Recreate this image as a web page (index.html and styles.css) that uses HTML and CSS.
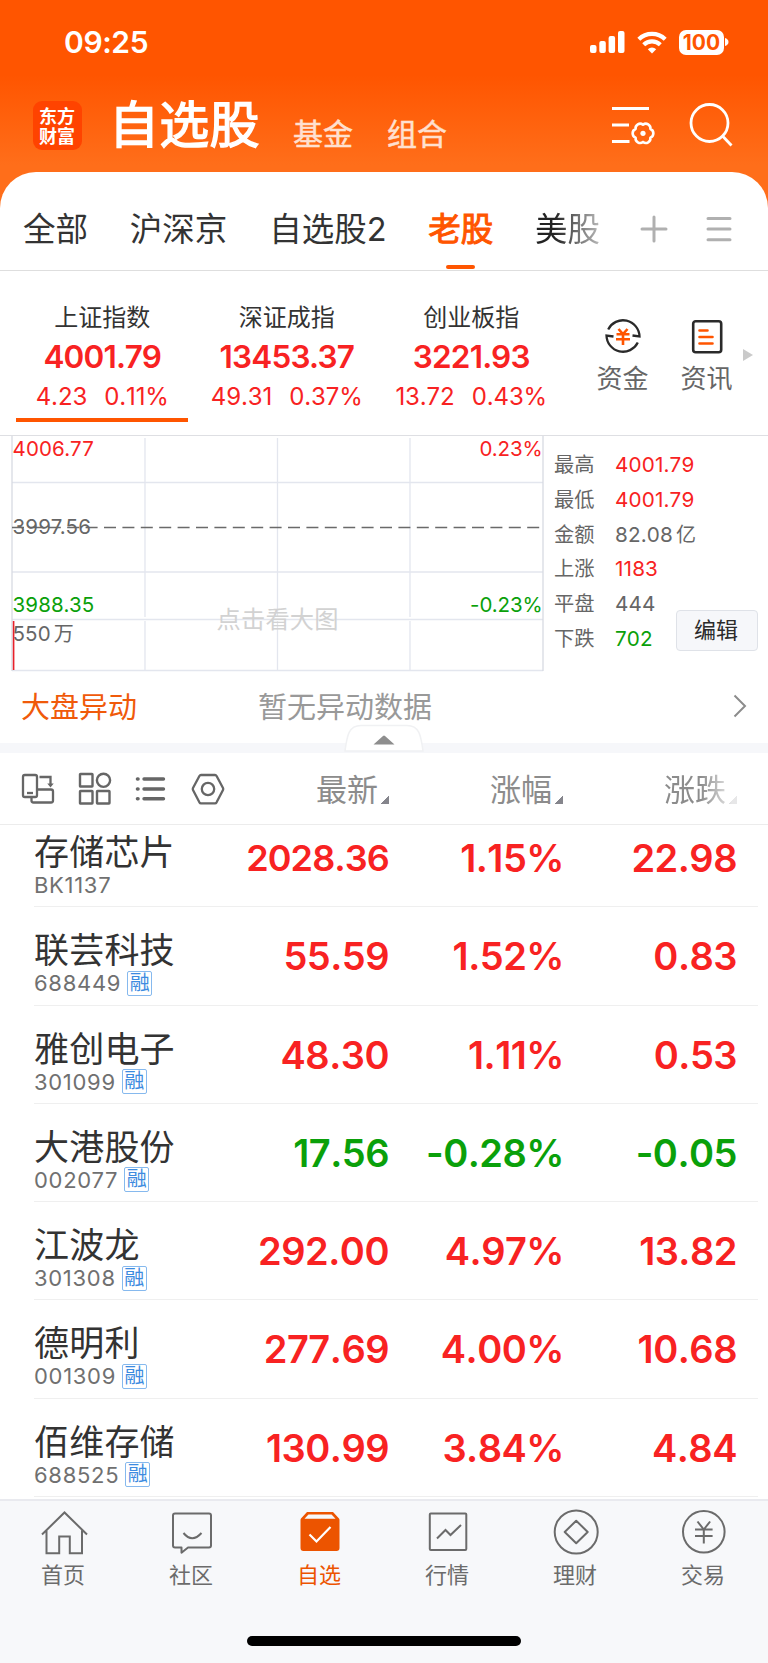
FILE: index.html
```html
<!DOCTYPE html>
<html lang="zh-CN">
<head>
    <meta charset="UTF-8">
    <meta name="viewport" content="width=device-width, initial-scale=1.0">
    <title>自选股</title>
    <link rel="stylesheet" href="styles.css">
</head>
<body>
    <header class="header">
        <div class="status-bar">
            <span class="time">09:25</span>
            <div class="status-icons">
                <svg class="signal" width="35" height="22" viewBox="0 0 35 22" fill="#fff">
                    <rect x="0" y="14" width="6.5" height="8" rx="2"/>
                    <rect x="9.3" y="10" width="6.5" height="12" rx="2"/>
                    <rect x="18.6" y="5" width="6.5" height="17" rx="2"/>
                    <rect x="28" y="0" width="6.5" height="22" rx="2"/>
                </svg>
                <svg class="wifi" width="30" height="23" viewBox="0 0 30 23" fill="none" stroke="#fff" stroke-width="4.2">
                    <path d="M1.8 8.2a19 19 0 0 1 26.4 0"/>
                    <path d="M6.7 13.8a12 12 0 0 1 16.6 0"/>
                    <path d="M15 22.5l-4.2-4.2a6 6 0 0 1 8.4 0z" fill="#fff" stroke="none"/>
                </svg>
                <span class="battery">100</span>
                <svg width="4" height="10" viewBox="0 0 4 10" fill="#fff"><path d="M0 1c2 .5 3.5 2 3.5 4S2 8.5 0 9z"/></svg>
            </div>
        </div>
        <div class="title-bar">
            <div class="logo">东方财富</div>
            <h1>自选股</h1>
            <a class="title-link">基金</a>
            <a class="title-link">组合</a>
            <svg class="filter-icon" width="46" height="42" viewBox="0 0 46 42" fill="none" stroke="#fff" stroke-width="3">
                <path d="M1 3.5h37M1 20h17M1 36.5h17.5"/>
                <path stroke-width="2.6" stroke-linejoin="round" d="M39.4 24a4.600 4.600 0 0 1 0 8.600a4.600 4.600 0 0 1-7.400 4.300a4.600 4.600 0 0 1-7.400-4.300a4.600 4.600 0 0 1 0-8.600a4.600 4.600 0 0 1 7.400-4.300a4.600 4.600 0 0 1 7.400 4.300z"/>
                <circle cx="32" cy="28.3" r="2.6" fill="#fff" stroke="none"/>
            </svg>
            <svg class="search-icon" width="44" height="46" viewBox="0 0 44 46" fill="none" stroke="#fff" stroke-width="2.8">
                <circle cx="20.5" cy="21" r="18.5"/>
                <path d="M33.5 34l9 9.5"/>
            </svg>
        </div>
    </header>

    <main class="sheet">
        <nav class="tabs">
            <a>全部</a>
            <a>沪深京</a>
            <a>自选股2</a>
            <a class="active">老股</a>
            <a class="fading">美股</a>
            <svg class="plus-icon" width="28" height="28" viewBox="0 0 28 28" stroke="#b0b0b0" stroke-width="3" stroke-linecap="round"><path d="M2 14h24M14 2v24"/></svg>
            <svg class="menu-icon" width="26" height="28" viewBox="0 0 26 28" stroke="#b0b0b0" stroke-width="3" stroke-linecap="round"><path d="M2 3.5h22M2 14h22M2 24.8h22"/></svg>
        </nav>

        <section class="indexes">
            <div class="index selected">
                <h3>上证指数</h3>
                <strong>4001.79</strong>
                <p><span>4.23</span><span>0.11%</span></p>
            </div>
            <div class="index">
                <h3>深证成指</h3>
                <strong>13453.37</strong>
                <p><span>49.31</span><span>0.37%</span></p>
            </div>
            <div class="index">
                <h3>创业板指</h3>
                <strong>3221.93</strong>
                <p><span>13.72</span><span>0.43%</span></p>
            </div>
            <div class="shortcut funds">
                <svg width="38" height="38" viewBox="0 0 38 38" fill="none" stroke="#2a2a2a" stroke-width="2.3">
                    <path d="M4.2 12.5A16.5 16.5 0 0 1 35.5 19.5l-7-1M33.8 25.5A16.5 16.5 0 0 1 2.5 18.5l7 1"/>
                    <path stroke="#ff5500" stroke-width="2.6" d="M14.5 12l4.5 5 4.5-5M12.5 17.3h13M12 22.3h14M19 17v11"/>
                </svg>
                <span>资金</span>
            </div>
            <div class="shortcut news">
                <svg width="38" height="38" viewBox="0 0 38 38" fill="none" stroke="#2a2a2a" stroke-width="2.6">
                    <rect x="5.2" y="4.2" width="28" height="31" rx="2.5"/>
                    <path stroke="#ff5500" stroke-width="2.6" stroke-linecap="round" d="M11.5 13.5h8M11.5 20h13M11.5 26.5h13"/>
                </svg>
                <span>资讯</span>
            </div>
            <svg class="more-arrow" width="10" height="14" viewBox="0 0 10 14" fill="#cacaca"><path d="M0 1l10 6-10 6z"/></svg>
        </section>

        <section class="market">
            <svg class="chart" width="545" height="238" viewBox="0 0 545 238">
                <g stroke="#e3e6ee" stroke-width="1.3" fill="none">
                    <path d="M12 46.5h531M12 136h531M12 183.5h531M12 234.5h531"/>
                    <path d="M145 2v179M277.5 2v179M410 2v179M145 185v49M277.5 185v49M410 185v49"/>
                    <path stroke="#d8dbe2" d="M12 0v235M543 0v235"/>
                </g>
                <path stroke="#6a6a6a" stroke-width="1.4" stroke-dasharray="12 6.4" d="M12 91.5h530"/>
                <path stroke="#e8202a" stroke-width="1.6" d="M13.6 185v49"/>
                <text class="watermark" x="216.500" y="191.500">点击看大图</text>
                <text class="up" x="12.5" y="20">4006.77</text>
                <text class="flat" x="12.5" y="98">3997.56</text>
                <text class="down" x="12.5" y="175.5">3988.35</text>
                <text class="flat" x="12.5" y="205">550<tspan class="unit" dx="3">万</tspan></text>
                <text class="percent up" x="542.5" y="20" text-anchor="end">0.23%</text>
                <text class="percent down" x="542.5" y="175.5" text-anchor="end">-0.23%</text>
            </svg>
            <dl class="stats">
                <dt>最高</dt><dd class="up">4001.79</dd>
                <dt>最低</dt><dd class="up">4001.79</dd>
                <dt>金额</dt><dd>82.08<span class="unit">亿</span></dd>
                <dt>上涨</dt><dd class="up">1183</dd>
                <dt>平盘</dt><dd>444</dd>
                <dt>下跌</dt><dd class="down">702</dd>
            </dl>
            <button class="edit-button">编辑</button>
        </section>

        <section class="movement">
            <h2>大盘异动</h2>
            <p>暂无异动数据</p>
            <svg width="14" height="24" viewBox="0 0 14 24" fill="none" stroke="#8c8c8c" stroke-width="2"><path d="M1.5 1.5L12 12 1.5 22.5"/></svg>
        </section>
        <div class="divider">
            <svg class="collapse" width="80" height="28" viewBox="0 0 80 28">
                <path d="M1 27C3 13 4 1.5 17 1.5h46C76 1.5 77 13 79 27z" fill="#fff" stroke="#f0f1f3" stroke-width="1.5"/>
                <path d="M29.5 20.5L39 12q1-.9 2 0l9.5 8.5z" fill="#8e8e8e"/>
            </svg>
        </div>

        <section class="list-head">
            <div class="tools">
                <svg width="34" height="34" viewBox="0 0 34 34" fill="none" stroke="#666" stroke-width="2.3">
                    <rect x="2" y="3" width="14" height="22" rx="1.8"/>
                    <path d="M6 21h6"/>
                    <path d="M16 17.5h14q2 0 2 2v9q0 2-2 2H12.5q-2 0-2-2V25M18.5 5h11v8"/>
                    <path d="M26.3 11.5h6.4l-3.2 4z" fill="#666" stroke="none"/>
                </svg>
                <svg width="34" height="34" viewBox="0 0 34 34" fill="none" stroke="#666" stroke-width="2.4">
                    <rect x="2" y="2" width="12.5" height="12.5" rx=".5"/>
                    <circle cx="25.5" cy="8.3" r="6.6"/>
                    <rect x="2" y="19" width="12.5" height="12.5" rx=".5"/>
                    <rect x="19" y="19" width="12.5" height="12.5" rx=".5"/>
                </svg>
                <svg width="34" height="34" viewBox="0 0 34 34" fill="none" stroke="#666" stroke-width="3.4" stroke-linecap="round">
                    <path d="M10 7h19.500M10 17h19.500M10 26.7h19.500"/>
                    <path d="M3.500 7h.5M3.500 17h.5M3.500 26.7h.5" stroke-width="3.6"/>
                </svg>
                <svg width="34" height="34" viewBox="0 0 34 34" fill="none" stroke="#666" stroke-width="2.3" stroke-linejoin="round">
                    <path d="M10 3h14q1 0 1.6 1L32 16q.5 1 0 2l-6.4 12.3q-.6 1-1.6 1H10q-1 0-1.6-1L2 18q-.5-1 0-2L8.4 4Q9 3 10 3z"/>
                    <circle cx="17" cy="17" r="6.2"/>
                </svg>
            </div>
            <span class="column">最新<i></i></span>
            <span class="column">涨幅<i></i></span>
            <span class="column faded">涨跌<i></i></span>
        </section>

        <section class="stocks">
            <div class="stock up">
                <div class="name"><h4>存储芯片</h4><p>BK1137</p></div>
                <span class="long">2028.36</span><span>1.15%</span><span>22.98</span>
            </div>
            <div class="stock up">
                <div class="name"><h4>联芸科技</h4><p>688449<em>融</em></p></div>
                <span>55.59</span><span>1.52%</span><span>0.83</span>
            </div>
            <div class="stock up">
                <div class="name"><h4>雅创电子</h4><p>301099<em>融</em></p></div>
                <span>48.30</span><span>1.11%</span><span>0.53</span>
            </div>
            <div class="stock down">
                <div class="name"><h4>大港股份</h4><p>002077<em>融</em></p></div>
                <span>17.56</span><span>-0.28%</span><span>-0.05</span>
            </div>
            <div class="stock up">
                <div class="name"><h4>江波龙</h4><p>301308<em>融</em></p></div>
                <span>292.00</span><span>4.97%</span><span>13.82</span>
            </div>
            <div class="stock up">
                <div class="name"><h4>德明利</h4><p>001309<em>融</em></p></div>
                <span>277.69</span><span>4.00%</span><span>10.68</span>
            </div>
            <div class="stock up">
                <div class="name"><h4>佰维存储</h4><p>688525<em>融</em></p></div>
                <span>130.99</span><span>3.84%</span><span>4.84</span>
            </div>
        </section>
    </main>

    <footer class="footer">
        <nav class="tab-bar">
            <a>
                <svg width="48" height="48" viewBox="0 0 48 48" fill="none" stroke="#6b6b6b" stroke-width="2">
                    <path d="M2 26.5L24.5 4.5 47 26.5M6.5 22.5v22.8h12.7V28.5h10.6v16.8h12.2V22.5"/>
                </svg>
                <span>首页</span>
            </a>
            <a>
                <svg width="48" height="48" viewBox="0 0 48 48" fill="none" stroke="#6b6b6b" stroke-width="2" stroke-linejoin="round">
                    <path d="M7 5.5h34q2 0 2 2v30q0 2-2 2H20l-6.5 5.2V39.5H7q-2 0-2-2v-30q0-2 2-2z"/>
                    <path d="M15.5 25q8.5 10.5 18 0"/>
                </svg>
                <span>社区</span>
            </a>
            <a class="active">
                <svg width="48" height="48" viewBox="0 0 48 48">
                    <path d="M11 4h26l6 6.500q.5.500.500 1.500v28q0 3-3 3h-33q-3 0-3-3V12q0-1 .5-1.500z" fill="#ec5400"/>
                    <path d="M12.5 6.5h23l4 4.300h-31z" fill="#f7f8fa"/>
                    <path d="M13.5 26.5l7 7L34.5 19" fill="none" stroke="#fff" stroke-width="2.2"/>
                </svg>
                <span>自选</span>
            </a>
            <a>
                <svg width="48" height="48" viewBox="0 0 48 48" fill="none" stroke="#6b6b6b" stroke-width="2">
                    <rect x="5.8" y="5.5" width="36.5" height="36.5" rx="1"/>
                    <path d="M13 30.5l8.5-8.5 5 5L37 17"/>
                </svg>
                <span>行情</span>
            </a>
            <a>
                <svg width="48" height="48" viewBox="0 0 48 48" fill="none" stroke="#6b6b6b" stroke-width="2">
                    <circle cx="24.2" cy="24" r="21.5"/>
                    <path stroke-linejoin="round" d="M24.2 12.7L35.7 24 24.2 35.3 12.7 24z"/>
                </svg>
                <span>理财</span>
            </a>
            <a>
                <svg width="48" height="48" viewBox="0 0 48 48" fill="none" stroke="#6b6b6b" stroke-width="2">
                    <circle cx="23.8" cy="23.8" r="20.8"/>
                    <path d="M17.5 13.5l6.3 8 6.3-8M15 21.5h17.6M15 28h17.6M23.8 21v14.5"/>
                </svg>
                <span>交易</span>
            </a>
        </nav>
        <div class="home-indicator"></div>
    </footer>
</body>
</html>
```
FILE: styles.css
```css
/* Base */
* {
    box-sizing: border-box;
    margin: 0;
    padding: 0;
}

body {
    width: 768px;
    height: 1663px;
    overflow: hidden;
    font-family: Inter, "Noto Sans CJK SC", sans-serif;
    color: #333;
    background: #fff;
}

svg {
    display: block;
    flex: none;
}

h1, h2, h3, h4, em, i {
    font-weight: 400;
    font-style: normal;
}

a, span, h1, h2, h3, h4 {
    white-space: nowrap;
}

.up { color: #f82222; fill: #f82222; }
.down { color: #0aa00a; fill: #0aa00a; }
.flat { fill: #666; }

/* Header */
.header {
    height: 212px;
    background: linear-gradient(#ff5500 0, #ff5500 75px, #ff6e1a 165px, #ff6e1a 100%);
    color: #fff;
}

.status-bar {
    display: flex;
    justify-content: space-between;
    height: 84px;
    padding: 0 39px 0 64px;
    align-items: center;
}

.time {
    font-size: 30px;
    font-weight: 600;
    letter-spacing: -0.4px;
}

.status-icons {
    display: flex;
    align-items: center;
}

.wifi {
    margin: 0 12px;
}

.battery {
    width: 45px;
    height: 25px;
    margin-right: 1px;
    border-radius: 7px;
    background: #fff;
    color: #ff5500;
    font-size: 21px;
    font-weight: 700;
    line-height: 25px;
    text-align: center;
}

.title-bar {
    display: flex;
    height: 82px;
    padding: 0 35px 0 33px;
    align-items: center;
}

.logo {
    width: 49px;
    height: 49px;
    padding: 4px 6px 0;
    border-radius: 9px;
    background: #ff4300;
    font-family: "Noto Sans CJK SC", sans-serif;
    font-size: 18px;
    font-weight: 700;
    line-height: 20px;
}

.title-bar h1 {
    margin: -8px 33px 0 27px;
    font-size: 50px;
    letter-spacing: 0.3px;
    -webkit-text-stroke: 1.4px #fff;
}

.title-link {
    margin: 14px 34px 0 0;
    font-size: 30px;
    color: #ffe0d0;
    -webkit-text-stroke: 0.5px #ffe0d0;
}

.filter-icon {
    margin: 2px 0 0 auto;
}

.search-icon {
    margin-left: 32px;
}

/* White sheet */
.sheet {
    height: 1327px;
    margin-top: -40px;
    border-radius: 36px 36px 0 0;
    background: #fff;
    overflow: hidden;
}

.tabs {
    display: flex;
    align-items: center;
    height: 99px;
    padding: 15px 36px 0 23px;
    border-bottom: 1px solid #dedede;
    font-size: 32.5px;
}

.tabs a {
    margin: -4px 41.8px 0 0;
}

.tabs .active {
    position: relative;
    color: #ff5500;
    -webkit-text-stroke: 1px #ff5500;
}

.tabs .active::after {
    content: "";
    position: absolute;
    left: 18px;
    bottom: -19px;
    width: 29px;
    height: 4px;
    border-radius: 2px;
    background: #ff5500;
}

.tabs .fading {
    background: linear-gradient(90deg, #222 30%, #bbb 100%);
    -webkit-background-clip: text;
    background-clip: text;
    color: transparent;
}

.plus-icon {
    margin-left: -2px;
}

.menu-icon {
    margin-left: auto;
}

/* Index cards */
.indexes {
    display: flex;
    height: 164px;
    padding: 31px 0 0 10px;
}

.index {
    display: flex;
    flex-direction: column;
    align-items: center;
    width: 184.5px;
    height: 121px;
}

.index h3 {
    font-size: 24px;
    line-height: 32px;
}

.index strong {
    font-size: 31.5px;
    font-weight: 600;
    letter-spacing: -0.8px;
    line-height: 46px;
    color: #f82222;
}

.index p {
    display: flex;
    gap: 17px;
    font-size: 24px;
    font-kerning: none;
    letter-spacing: -0.1px;
    line-height: 34px;
    color: #f82222;
}

.index.selected::after {
    content: "";
    width: 172px;
    height: 4px;
    margin-top: 4px;
    background: #ff5500;
}

.shortcut {
    display: flex;
    flex-direction: column;
    align-items: center;
    width: 84px;
    padding-top: 15px;
    font-size: 26px;
    line-height: 36px;
    color: #666;
}

.shortcut span {
    margin-top: 6px;
}

.funds {
    margin-left: 17px;
}

.more-arrow {
    margin: 46px 0 0 -6px;
}

/* Chart and statistics */
.market {
    position: relative;
    display: flex;
    height: 238px;
    border-top: 1px solid #dedfe3;
}

.chart text {
    font-size: 20.5px;
    letter-spacing: 0.15px;
}

.chart .percent {
    letter-spacing: -0.1px;
}

.chart .unit,
.stats .unit {
    font-size: 20px;
}

.chart .watermark {
    font-size: 24.3px;
    fill: #d2d2d2;
}

.stats {
    display: grid;
    grid-template-columns: 62px auto;
    grid-auto-rows: 34.8px;
    align-content: start;
    padding: 11px 0 0 9px;
    font-size: 20.3px;
    line-height: 35px;
    color: #666;
}

.stats dd {
    margin-left: -1px;
    font-size: 20.7px;
    font-kerning: none;
    letter-spacing: 0.15px;
}

.stats .unit {
    margin-left: 3px;
}

.edit-button {
    position: absolute;
    left: 676px;
    top: 174px;
    width: 82px;
    height: 41px;
    padding: 0 2px 6px 0;
    border: 1.5px solid #dfe2e8;
    border-radius: 4px;
    background: #f6f7fa;
    color: #2b2b2b;
    font-family: inherit;
    font-size: 22px;
}

/* Market movement */
.movement {
    display: flex;
    align-items: center;
    height: 70px;
    padding: 0 21px 7px;
    font-size: 29px;
}

.movement h2 {
    width: 237px;
    font-size: 29px;
    color: #f05a0a;
}

.movement p {
    color: #999;
}

.movement svg {
    margin: 3px 0 0 auto;
}

.divider {
    position: relative;
    height: 10px;
    background: #f6f7fa;
}

.collapse {
    position: absolute;
    left: 344px;
    bottom: 1px;
}

/* List header */
.list-head {
    display: flex;
    align-items: center;
    height: 72px;
    padding-right: 31px;
    border-bottom: 1px solid #ececec;
    font-size: 31px;
    color: #8c8c8c;
}

.tools {
    display: flex;
    gap: 22.5px;
    width: 215px;
    padding-left: 21px;
}

.column {
    display: flex;
    justify-content: flex-end;
    align-items: center;
    width: 174px;
    margin-top: -3px;
}

.column i {
    width: 8px;
    height: 8px;
    margin: 25px 0 0 3px;
    background: linear-gradient(135deg, transparent 50%, #85858c 50%);
}

.faded {
    -webkit-mask-image: linear-gradient(90deg, #000 79%, rgba(0, 0, 0, 0.2) 97%);
    mask-image: linear-gradient(90deg, #000 79%, rgba(0, 0, 0, 0.2) 97%);
}

/* Stock rows */
.stocks {
    height: 674px;
    padding-left: 34px;
    overflow: hidden;
}

.stock {
    display: flex;
    height: 98.25px;
    width: 724px;
    padding-right: 21px;
    border-bottom: 1px solid #efefef;
    font-size: 38px;
    font-weight: 600;
}

.stock:first-child {
    margin-top: -16px;
}

.stock > span {
    width: 174px;
    font-kerning: none;
    letter-spacing: -0.5px;
    line-height: 98px;
    text-align: right;
}

.stock > span:nth-child(3) {
    position: relative;
    left: 1px;
}

.stock > .long {
    font-size: 36px;
    letter-spacing: -0.9px;
}

.name {
    width: 181px;
    padding-top: 20px;
    font-weight: 400;
}

.name h4 {
    font-size: 35px;
    letter-spacing: 0.2px;
    line-height: 46px;
    color: #333;
}

.name p {
    display: flex;
    align-items: center;
    gap: 6px;
    height: 20px;
    font-size: 22px;
    letter-spacing: 0.7px;
    line-height: 20px;
    color: #707070;
}

.name em {
    width: 25px;
    height: 25px;
    border: 1.5px solid #86b9ee;
    border-radius: 2px;
    font-size: 20px;
    letter-spacing: 0;
    line-height: 22px;
    text-align: center;
    color: #3d8be0;
}

/* Bottom tab bar */
.footer {
    height: 164px;
    border-top: 2px solid #e9eaef;
    background: #f7f8fa;
}

.tab-bar {
    display: flex;
    height: 135px;
    padding-top: 7px;
}

.tab-bar a {
    display: flex;
    flex-direction: column;
    align-items: center;
    width: 128px;
    font-size: 22px;
    line-height: 30px;
    color: #6b6b6b;
}

.tab-bar span {
    margin: 4px 2px 0 0;
}

.tab-bar .active {
    color: #ec5400;
}

.home-indicator {
    width: 274px;
    height: 10px;
    margin: 0 auto;
    border-radius: 5px;
    background: #000;
}
```
